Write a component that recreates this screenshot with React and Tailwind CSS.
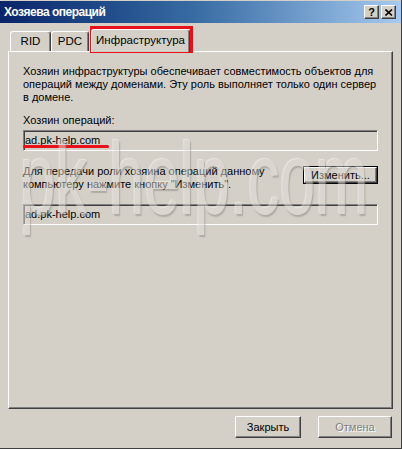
import React from 'react';

const raised =
  'border-t border-l border-t-white border-l-white border-r border-b border-r-[#404040] border-b-[#404040] shadow-[inset_-1px_-1px_0_#808080]';
const sunken =
  'border-t border-l border-t-[#808080] border-l-[#808080] border-r border-b border-r-white border-b-white shadow-[inset_1px_1px_0_#404040]';

const Tab = ({ label, selected, className = '' }) => (
  <div
    className={`${className} flex items-center justify-center rounded-t-[3px] border-t border-l border-t-white border-l-white border-r border-r-[#404040] shadow-[inset_-1px_0_0_#808080] bg-[#d4d0c8] ${
      selected ? 'h-[23px] -mb-px z-10 relative' : 'h-[20px]'
    }`}
  >
    <span className="text-[11.5px] leading-none text-black">{label}</span>
  </div>
);

const ReadOnlyField = ({ value, children }) => (
  <div className={`relative h-[21px] flex items-center pl-[1px] bg-[#d4d0c8] ${sunken}`}>
    <span className="text-[11px] text-black whitespace-nowrap">{value}</span>
    {children}
  </div>
);

export default function App() {
  return (
    <div className="relative w-[402px] h-[449px] bg-[#d4d0c8] overflow-hidden font-['Liberation_Sans',Arial,sans-serif] border-r border-b border-r-[#404040] border-b-[#404040]">
      {/* Title bar */}
      <div className="h-[22px] mt-[1px] flex items-center pl-[4px] pr-[4px] bg-gradient-to-r from-[#0a246a] via-[#3a6ea5] to-[#a6caf0]">
        <span className="text-white font-bold text-[12px] leading-none tracking-[-0.5px]">Хозяева операций</span>
        <div className="ml-auto flex gap-[2px] mr-[1px]">
          <div className={`w-[15px] h-[14px] bg-[#d4d0c8] flex items-center justify-center ${raised}`}>
            <span className="text-[11px] font-bold leading-none text-black">?</span>
          </div>
          <div className={`w-[15px] h-[14px] bg-[#d4d0c8] flex items-center justify-center ${raised}`}>
            <svg width="8" height="7" viewBox="0 0 8 7">
              <path d="M0.5 0.5 L7 6.5 M7 0.5 L0.5 6.5" stroke="#000" strokeWidth="1.6" />
            </svg>
          </div>
        </div>
      </div>

      {/* Tabs */}
      <div className="px-[8px] mt-[6px]">
        <div className="flex items-end h-[22px] pl-[2px]">
          <Tab label="RID" className="w-[41px]" />
          <Tab label="PDC" className="w-[38px]" />
          <Tab label="Инфраструктура" selected className="w-[99px] ml-[2px]" />
        </div>

        {/* Tab panel */}
        <div className={`relative h-[358px] px-[14px] pt-[13px] bg-[#d4d0c8] ${raised}`}>
          <div className="text-[11px] leading-[13px] text-black whitespace-nowrap">
            <div>Хозяин инфраструктуры обеспечивает совместимость объектов для</div>
            <div>операций между доменами. Эту роль выполняет только один сервер</div>
            <div>в домене.</div>
          </div>

          <div className="mt-[10px] text-[11px] leading-[13px] text-black">Хозяин операций:</div>
          <div className="mt-[3px]">
            <ReadOnlyField value="ad.pk-help.com">
              <div className="absolute left-[-1px] top-[14px] w-[86px] h-[3px] rounded-full bg-[#e8111a]" />
            </ReadOnlyField>
          </div>

          <div className="mt-[14px] flex items-start">
            <div className="text-[11px] leading-[13px] text-black whitespace-nowrap">
              <div>Для передачи роли хозяина операций данному</div>
              <div>компьютеру нажмите кнопку "Изменить".</div>
            </div>
            <div className="ml-auto mt-[1px] w-[75px] h-[18px] border border-black">
              <div className={`w-full h-full flex items-center justify-center bg-[#d4d0c8] ${raised}`}>
                <span className="text-[11px] leading-none text-black">Изменить...</span>
              </div>
            </div>
          </div>

          <div className="mt-[13px]">
            <ReadOnlyField value="ad.pk-help.com" />
          </div>
        </div>

        {/* Bottom buttons */}
        <div className="flex justify-end gap-[17px] mt-[7px] pr-[1px]">
          <div className={`w-[66px] h-[22px] flex items-center justify-center bg-[#d4d0c8] ${raised}`}>
            <span className="text-[11px] leading-none text-black">Закрыть</span>
          </div>
          <div className={`w-[74px] h-[22px] flex items-center justify-center bg-[#d4d0c8] ${raised}`}>
            <span className="text-[11px] leading-none text-[#808080] [text-shadow:1px_1px_0_#ffffff]">Отмена</span>
          </div>
        </div>
      </div>

      {/* Red highlight around selected tab */}
      <div className="absolute left-[90px] top-[26px] w-[103px] h-[27px] border-[3px] border-[#e8111a] pointer-events-none" />

      {/* Watermark */}
      <div className="absolute left-[20px] top-[128px] pointer-events-none opacity-50">
        <div className="origin-top scale-y-[1.6] text-[64px] leading-none text-[#e2dfd8] [text-shadow:1px_1px_1px_#8a8780,-1px_-1px_1px_#ffffff] font-['Liberation_Sans',Arial,sans-serif]">
          pk-help.com
        </div>
      </div>
    </div>
  );
}
